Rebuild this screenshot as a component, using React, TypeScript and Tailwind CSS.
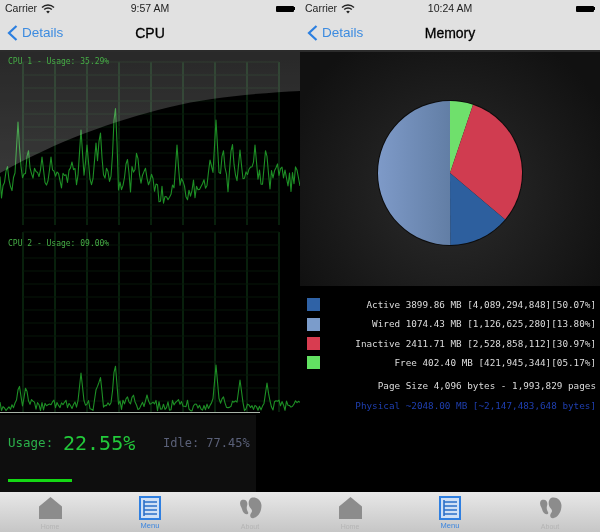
const sans = "font-['Liberation_Sans',sans-serif]";
const mono = "font-['DejaVu_Sans_Mono',monospace]";

type P = [number, number];

function line(peaks: P[], base: (x: number) => number, amp: number, seed: number) {
  const pts: string[] = [];
  for (let x = 0; x <= 300; x += 1.5) {
    const n = Math.sin(x * 12.9898 + seed) * 43758.5453;
    const r = n - Math.floor(n);
    let y = base(x) - r * amp;
    for (const [px, py] of peaks) {
      const d = Math.abs(x - px);
      if (d < 3.5) y = Math.min(y, py + (d / 3.5) * (base(x) - py) * 0.85);
    }
    pts.push(`${x},${y.toFixed(1)}`);
  }
  return pts.join(" ");
}

const cpu1Peaks: P[] = [
  [5, 180], [7, 162], [18, 122], [28, 145], [35, 165], [42, 157], [51, 157], [72, 162],
  [81, 130], [87, 145], [96, 143], [100, 125], [107, 165], [115, 97], [127, 155], [137, 148],
  [145, 165], [152, 170], [177, 145], [182, 175], [210, 160], [216, 120], [223, 145],
  [232, 138], [240, 150], [255, 145], [266, 145], [277, 160], [285, 170], [297, 170],
];
const cpu2Peaks: P[] = [
  [19, 383], [26, 385], [32, 398], [50, 403], [81, 373], [97, 383], [100, 373], [115, 360],
  [127, 395], [133, 393], [147, 395], [178, 398], [216, 365], [223, 395], [240, 380],
  [267, 383], [277, 400], [298, 400],
];
const cpu1Base = (x: number) => (x > 150 && x < 208 ? 205 : x < 10 ? 200 : 192);
const cpu2Base = () => 411;

function Grid({ y1, y2 }: { y1: number; y2: number }) {
  const v: number[] = [];
  for (let x = 23; x <= 280; x += 32) v.push(x);
  const h: number[] = [];
  for (let y = y1; y <= y2; y += 13) h.push(y);
  return (
    <g>
      {v.map((x) => (
        <line key={x} x1={x} x2={x} y1={y1} y2={y2} stroke="#08200c" strokeWidth="2" />
      ))}
      {h.map((y) => (
        <line key={y} x1={23} x2={279} y1={y} y2={y} stroke="#061708" strokeWidth="1" />
      ))}
    </g>
  );
}

function Wifi() {
  return (
    <svg width="14" height="10" viewBox="0 0 14 10" fill="none" stroke="#222" strokeWidth="1.4">
      <path d="M1 3.5a8.5 8.5 0 0 1 12 0" />
      <path d="M3.2 5.6a5.4 5.4 0 0 1 7.6 0" />
      <path d="M7 9.5 5.2 7.6a2.6 2.6 0 0 1 3.6 0Z" fill="#222" stroke="none" />
    </svg>
  );
}

function Battery() {
  return (
    <div className="flex items-center">
      <div className="w-[18px] h-[6px] bg-black rounded-[1px]" />
      <div className="w-[1px] h-[3px] bg-black" />
    </div>
  );
}

function Header({ time, title }: { time: string; title: string }) {
  return (
    <div className={`${sans} h-[52px] shrink-0 bg-[#e1e1e1] border-b-2 border-[#2b2b2b] flex flex-col`}>
      <div className="h-[17px] pl-[5px] pr-[5px] grid grid-cols-3 items-center text-[#222] text-[10.5px]">
        <div className="flex items-center gap-[4px]">
          <span>Carrier</span>
          <Wifi />
        </div>
        <div className="text-center font-medium">{time}</div>
        <div className="flex justify-end">
          <Battery />
        </div>
      </div>
      <div className="relative flex-1 flex items-center justify-center">
        <div className="absolute left-[7px] top-[6px] flex items-center gap-[4px] text-[#3c8be0] text-[13.5px]">
          <svg width="11" height="16" viewBox="0 0 11 16" fill="none" stroke="#2b7fe0" strokeWidth="2.2">
            <path d="M9.5 1 2 8l7.5 7" />
          </svg>
          <span>Details</span>
        </div>
        <span className="text-[14px] font-medium text-black [-webkit-text-stroke:0.3px_black]">{title}</span>
      </div>
    </div>
  );
}

function TabBar() {
  return (
    <div className={`${sans} h-[40px] shrink-0 grid grid-cols-3 bg-gradient-to-b from-[#e8e8e8] to-[#c6c6c6]`}>
      <div className="flex flex-col items-center pt-[5px]">
        <svg width="25" height="22" viewBox="0 0 26 23">
          <path d="M13 0 25 10V23H1V10Z" fill="#8c8c8c" />
        </svg>
        <span className="mt-[4px] text-[7px] leading-[8px] text-[#b4b4b4]">Home</span>
      </div>
      <div className="flex flex-col items-center pt-[4px]">
        <svg width="22" height="24" viewBox="0 0 22 24" fill="none">
          <rect x="1" y="1" width="20" height="22" fill="#cfe0f5" stroke="#2f7fe0" strokeWidth="2" />
          <path d="M5 6h13M5 10h13M5 14h13M5 18h13" stroke="#2a6fc8" strokeWidth="1.6" />
          <path d="M5 4v16" stroke="#2a6fc8" strokeWidth="1.6" />
        </svg>
        <span className="mt-[2px] text-[7.5px] leading-[7px] text-[#3b86e0]">Menu</span>
      </div>
      <div className="flex flex-col items-center pt-[5px]">
        <svg width="26" height="22" viewBox="0 0 26 23" fill="#8c8c8c">
          <path d="M14 1c5-2 11 2 11 8 0 7-4 12-8 13-3 1-5-2-3-5 2-2 1-4-1-6-2-3-2-8 1-10Z" />
          <path d="M5 3c4-1 6 2 5 6-1 3 0 5 1 7 1 2-2 3-4 1-2-2-2-4-3-6C2 8 2 4 5 3Z" />
        </svg>
        <span className="mt-[4px] text-[7px] leading-[8px] text-[#b4b4b4]">About</span>
      </div>
    </div>
  );
}

function CpuChart1() {
  return (
    <div className="relative h-[173px] shrink-0">
      <svg width="300" height="173" viewBox="0 52 300 173" className="block">
        <defs>
          <linearGradient id="gloss" x1="0" y1="0" x2="0" y2="1">
            <stop offset="0" stopColor="#383838" />
            <stop offset="1" stopColor="#4c4c4c" />
          </linearGradient>
        </defs>
        <Grid y1={62} y2={225} />
        <polyline
          points={line(cpu1Peaks, cpu1Base, 26, 1.3)}
          fill="none"
          stroke="#1d8f25"
          strokeWidth="1.1"
          strokeLinejoin="round"
          className="blur-[0.3px]"
        />
        <path
          d="M0 173C60 140 110 122 170 107C210 97 260 93 300 91V52H0Z"
          fill="url(#gloss)"
          opacity="0.72"
          style={{ mixBlendMode: "screen" }}
        />
      </svg>
      <span className={`${mono} absolute left-[8px] top-[4px] text-[8px] leading-[12px] text-[#46ad46]`}>
        CPU 1 - Usage: 35.29%
      </span>
    </div>
  );
}

function CpuChart2() {
  return (
    <div className="relative h-[190px] shrink-0">
      <svg width="300" height="190" viewBox="0 225 300 190" className="block">
        <Grid y1={232} y2={412} />
        <polyline
          points={line(cpu2Peaks, cpu2Base, 11, 4.7)}
          fill="none"
          stroke="#1d8f25"
          strokeWidth="1.1"
          strokeLinejoin="round"
          className="blur-[0.3px]"
        />
        <line x1="0" x2="260" y1="412.5" y2="412.5" stroke="#a9b4a9" strokeWidth="1" />
      </svg>
      <span className={`${mono} absolute left-[8px] top-[13px] text-[8px] leading-[12px] text-[#46ad46]`}>
        CPU 2 - Usage: 09.00%
      </span>
    </div>
  );
}

function UsagePanel() {
  return (
    <div className={`${mono} flex-1 w-[256px] bg-[#0e0e0e] pl-[8px] pr-[6px] pt-[15px] flex flex-col`}>
      <div className="flex items-center h-[26px]">
        <span className="text-[12.5px] text-[#2bb04a] w-[55px]">Usage:</span>
        <span className="text-[20px] text-[#22c93a] w-[100px]">22.55%</span>
        <span className="text-[12px] text-[#5a6078] whitespace-nowrap">Idle: 77.45%</span>
      </div>
      <div className="mt-[23px] w-[64px] h-[3px] bg-[#14d814]" />
    </div>
  );
}

function polar(a: number, r: number): P {
  const t = ((a - 25) / 100) * Math.PI * 2;
  return [r * Math.cos(t), r * Math.sin(t)];
}

function Slice({ from, to, fill }: { from: number; to: number; fill: string }) {
  const [x1, y1] = polar(from, 72);
  const [x2, y2] = polar(to, 72);
  const large = to - from > 50 ? 1 : 0;
  return <path d={`M0 0L${x1} ${y1}A72 72 0 ${large} 1 ${x2} ${y2}Z`} fill={fill} />;
}

const rows: { text: string; color?: string }[] = [
  { text: "Active 3899.86 MB [4,089,294,848][50.07%]", color: "bg-[#2f62a6]" },
  { text: "Wired 1074.43 MB [1,126,625,280][13.80%]", color: "bg-[#7b9ccb]" },
  { text: "Inactive 2411.71 MB [2,528,858,112][30.97%]", color: "bg-[#d83c50]" },
  { text: "Free 402.40 MB [421,945,344][05.17%]", color: "bg-[#62e262]" },
];

function MemoryPie() {
  return (
    <div className="h-[234px] shrink-0 pt-[8px] flex items-center justify-center bg-[radial-gradient(circle_at_50%_60%,#2c2c2c,#111111_85%)]">
      <svg width="148" height="148" viewBox="-74 -74 148 148">
        <defs>
          <linearGradient id="lb" x1="0" y1="0" x2="1" y2="0">
            <stop offset="0" stopColor="#7e9ac8" />
            <stop offset="1" stopColor="#627ea5" />
          </linearGradient>
        </defs>
        <circle r="73" fill="#0c0c0c" />
        <Slice from={0} to={5.17} fill="#6fe06c" />
        <Slice from={5.17} to={36.14} fill="#d03c50" />
        <Slice from={36.14} to={49.94} fill="#2d5f9e" />
        <Slice from={49.94} to={100} fill="url(#lb)" />
      </svg>
    </div>
  );
}

function Legend() {
  return (
    <div className={`${mono} flex-1 text-[9.3px] whitespace-nowrap pt-[9px] pr-[4px] pl-[7px]`}>
      {rows.map((r) => (
        <div key={r.text} className="h-[19.4px] flex items-center justify-between">
          <div className={`w-[13px] h-[13px] ${r.color}`} />
          <span className="text-[#dcdcdc]">{r.text}</span>
        </div>
      ))}
      <div className="h-[23px] mt-[2px] flex items-center justify-end text-[#dcdcdc]">
        Page Size 4,096 bytes - 1,993,829 pages
      </div>
      <div className="h-[17px] flex items-center justify-end text-[#1f3fb0]">
        Physical ~2048.00 MB [~2,147,483,648 bytes]
      </div>
    </div>
  );
}

export default function App() {
  return (
    <div className="w-[600px] h-[532px] flex bg-black overflow-hidden">
      <div className="w-[300px] flex flex-col">
        <Header time="9:57 AM" title="CPU" />
        <CpuChart1 />
        <CpuChart2 />
        <UsagePanel />
        <TabBar />
      </div>
      <div className="w-[300px] flex flex-col">
        <Header time="10:24 AM" title="Memory" />
        <MemoryPie />
        <Legend />
        <TabBar />
      </div>
    </div>
  );
}
